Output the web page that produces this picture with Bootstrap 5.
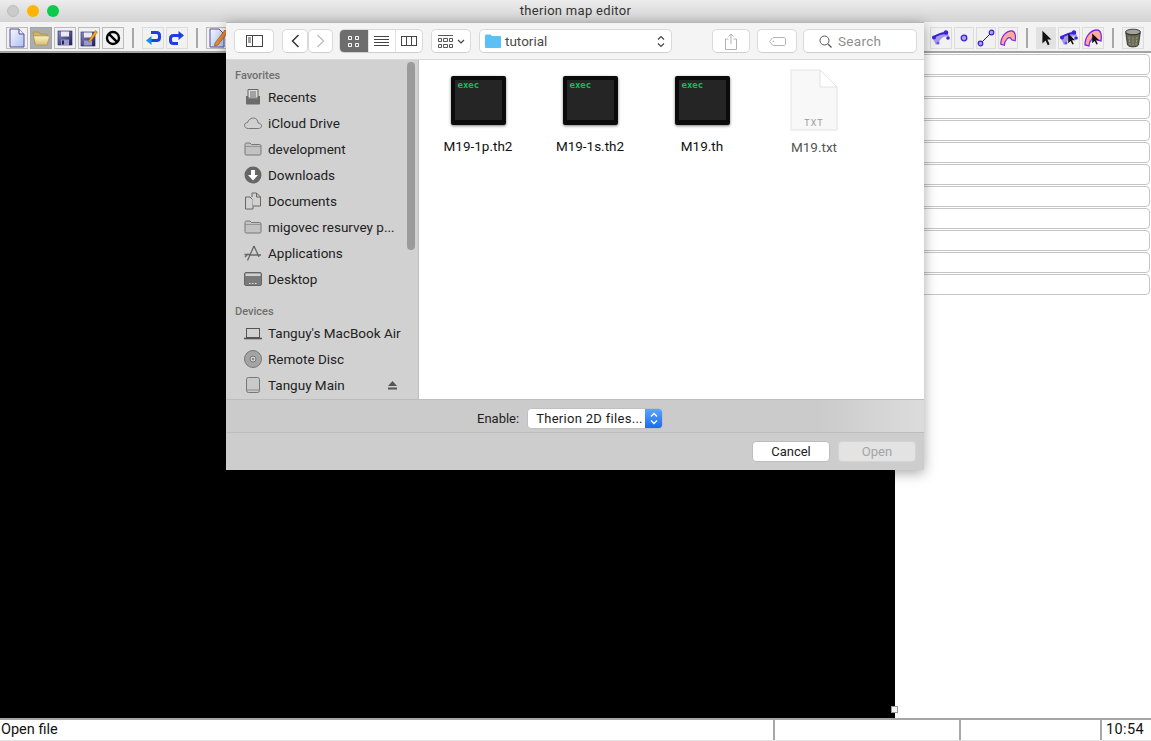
<!DOCTYPE html>
<html lang="en">
<head>
<meta charset="UTF-8">
<title>therion map editor</title>
<link href="https://cdn.jsdelivr.net/npm/bootstrap@5.3.0/dist/css/bootstrap.min.css" rel="stylesheet">
<style>
body { font-family: Roboto, "Liberation Sans", sans-serif; font-size: 13px; color: #1c1c1c; background: #fff; overflow: hidden; }
svg { display: block; }
.app-shell { height: 741px; }
.win-title { height: 22px; background: linear-gradient(#ececec, #d3d3d3); font-size: 13px; color: #333; letter-spacing: .3px; }
.lights { left: 7px; top: 5px; gap: 8px; }
.light { width: 12px; height: 12px; border-radius: 50%; }
.light-off { background: #cbcbcb; border: 1px solid #bcbcbc; }
.light-min { background: #ffb400; }
.light-max { background: #0ccb4b; }
.tool-strip { height: 31px; background: #f3f3f3; border-bottom: 2px solid #a4a4a4; padding: 5px 7px 0 6px; }
.tool-btn { width: 22px; height: 22px; background: #f1f1f1; border: 1px solid #bbb; }
.tool-btn.sm { width: 20px; }
.tool-btn.soft { border-color: #dcdcdc; }
.tool-btn.down { background: #adadad; border-color: #a5a5a5; }
.tool-btn.pressed { background: #e2e2e2; border-color: #e2e2e2; }
.tool-sep { width: 2px; height: 20px; background: #a8a8a8; margin: 1px 8px 0 8px; }
.canvas-area { width: 895px; background: #000; }
.grip { right: -3px; bottom: 5px; width: 7px; height: 7px; background: #f4f4f4; border: 1px solid #999; }
.side-panel { padding: 1px 1px 0 0; gap: 1px; }
.panel-row { height: 21px; background: #fff; border: 1px solid #c6c6c6; border-radius: 4px; }
.status-strip { height: 23px; border-top: 2px solid #a4a4a4; border-bottom: 1px solid #e4e4e4; font-size: 14.5px; line-height: 19px; color: #111; }
.stat-a { width: 773px; padding-left: 1px; }
.stat-b { width: 186px; border-left: 2px solid #a8a8a8; }
.stat-c { width: 141px; border-left: 2px solid #a8a8a8; }
.stat-d { flex: 1; border-left: 2px solid #a8a8a8; padding-left: 4px; letter-spacing: .4px; }
/* open dialog */
.open-sheet { left: 226px; top: 22px; width: 698px; height: 448px; background: #cdcdcd; box-shadow: 0 3px 12px rgba(0,0,0,.35); font-size: 13.5px; }
.sheet-bar { height: 38px; background: #f4f4f4; border-top: 1px solid #b5b5b5; border-bottom: 1px solid #d8d8d8; padding: 6px 0 0 8px; }
.mac-btn { height: 24px; background: #fff; border: 1px solid #d9d9d9; border-bottom-color: #cfcfcf; border-radius: 5px; }
.w-side { width: 40px; margin-right: 8px; }
.w-nav { width: 26px; }
.w-fwd { width: 25px; margin-right: 6px; }
.seg-view { width: 84px; margin-right: 8px; overflow: hidden; }
.seg-item { width: 28px; height: 100%; border-left: 1px solid #e2e2e2; }
.seg-item.on { width: 29px; background: #6d6d6d; border: 0; }
.w-arr { width: 40px; margin-right: 8px; }
.w-path { width: 193px; padding: 0 6px 0 5px; margin-right: 40px; color: #4a4a4a; gap: 4px; }
.w-act { width: 38px; margin-right: 7px; }
.w-tag { width: 40px; margin-right: 6px; }
.w-find { width: 114px; color: #8f8f8f; padding-left: 15px; gap: 6px; letter-spacing: .3px; }
.sheet-body { height: 339px; }
.places { width: 193px; background: #d1d1d1; border-right: 1px solid #bdbdbd; padding-top: 9px; overflow: hidden; }
.place-head { font-size: 11px; font-weight: 500; color: #6f6f6f; padding-left: 9px; height: 14px; line-height: 14px; margin-bottom: 1px; }
.place-head.second { margin-top: 13px; }
.place-row { height: 26px; padding-left: 18px; gap: 6px; color: #222; }
.place-ico { width: 18px; flex: none; }
.eject { margin-left: auto; margin-right: 21px; }
.scroll-thumb { left: 181px; top: 2px; width: 8px; height: 188px; background: #9b9b9b; border-radius: 4px; }
.file-grid { padding: 15px 0 0 3px; }
.file-cell { width: 112px; }
.exec-ico { width: 55px; height: 49px; background: #252525; border: 4px solid #0b0b0b; border-bottom-width: 5px; border-radius: 2px; box-shadow: 0 1px 3px rgba(0,0,0,.5); color: #10c060; font: bold 9px/10px "DejaVu Sans Mono", monospace; padding: 0 0 0 3px; margin-top: 1px; }
.file-name { margin-top: 13px; line-height: 16px; color: #111; }
.file-name.dim { color: #555; }
.txt-ico { margin-top: -6px; margin-bottom: -5px; }
.enable-bar { height: 34px; border-top: 1px solid #bdbdbd; border-bottom: 1px solid #bdbdbd; background: linear-gradient(90deg, #cbcbcb 0, #cbcbcb 85%, #dcdcdc 100%); padding-top: 5px; font-size: 13px; }
.enable-lbl { margin-left: 251px; margin-right: 8px; color: #222; }
.popup { width: 136px; height: 21px; background: #fff; border: 1px solid #c0c0c0; border-radius: 4px; overflow: hidden; padding-left: 8px; letter-spacing: .3px; }
.popup-arrows { width: 17px; height: 21px; background: linear-gradient(#5fa8fb, #1668ef); }
.foot-bar { height: 37px; padding: 0 8px 0 0; gap: 8px; font-size: 13px; }
.foot-btn { width: 78px; height: 21px; background: #fff; border: 1px solid #bcbcbc; border-radius: 4px; color: #222; }
.foot-btn.off { background: #e3e3e3; border-color: #d4d4d4; color: #a4a4a4; }
</style>
</head>
<body>
<svg width="0" height="0" class="position-absolute">
  <defs>
    <linearGradient id="pg" x1="0" y1="0" x2="1" y2="1"><stop offset="0" stop-color="#f6f8ff"/><stop offset="1" stop-color="#a9c0f2"/></linearGradient>
    <linearGradient id="fg" x1="0" y1="0" x2="0" y2="1"><stop offset="0" stop-color="#fbf2c0"/><stop offset="1" stop-color="#d8bf70"/></linearGradient>
    <linearGradient id="dk" x1="0" y1="0" x2="1" y2="1"><stop offset="0" stop-color="#8f8fc8"/><stop offset="1" stop-color="#1d1d56"/></linearGradient>
    <symbol id="i-folder" viewBox="0 0 18 18"><path d="M1 4.500C1 3.700 1.500 3 2.300 3H6l1.500 1.500h8.200c.8 0 1.300.6 1.300 1.300v8c0 .8-.5 1.200-1.300 1.200H2.300C1.500 15 1 14.600 1 13.800Z" fill="#c2c2c2" stroke="#777"/><path d="M1 6.500H17" stroke="#8a8a8a" stroke-width=".8"/></symbol>
    <symbol id="i-line" viewBox="0 0 20 20"><path d="M2 11C3 7 9 4 16 3L18 8C13 8 10 10 8 14L5 17C4 15 3 13 2 11Z" fill="#a59bee"/><path d="M2 9.500C7 6 12 5 17 5" stroke="#3c22d8" stroke-width="2" fill="none"/><circle cx="3" cy="9.500" r="2" fill="#3c22d8"/><circle cx="15" cy="4.500" r="2.200" fill="#3c22d8"/><circle cx="17" cy="10" r="1.800" fill="#3c22d8"/><circle cx="7" cy="15" r="1.500" fill="#6a52e0"/></symbol>
    <symbol id="i-area" viewBox="0 0 20 20"><path d="M2 17C2 8 8 2 14 2C18 2 19 8 18 13L14 12C13 9 11 9 9 11C7 13 6 15 6 18Z" fill="#fcaa9c" stroke="#7c28e4" stroke-width="1.300"/></symbol>
    <symbol id="i-cursor" viewBox="0 0 20 20"><path d="M6 2V16L9.500 12.800L12 18L14 17L11.500 11.800H16Z" fill="#111"/></symbol>
  </defs>
</svg>

<div class="app-shell d-flex flex-column position-relative">
  <div class="win-title d-flex align-items-center justify-content-center position-relative">
    <div class="lights d-flex position-absolute">
      <span class="light light-off"></span><span class="light light-min"></span><span class="light light-max"></span>
    </div>
    <span>therion map editor</span>
  </div>

  <div class="tool-strip d-flex justify-content-between">
    <div class="d-flex gap-0">
      <div class="d-flex" style="gap:2px">
        <div class="tool-btn d-flex align-items-center justify-content-center"><svg width="18" height="20" viewBox="0 0 18 20"><path d="M2 1H11L16 6V19H2Z" fill="url(#pg)" stroke="#5b4a96"/><path d="M11 1V6H16" fill="#e8ecfb" stroke="#5b4a96"/></svg></div>
        <div class="tool-btn down d-flex align-items-center justify-content-center"><svg width="20" height="18" viewBox="0 0 20 18"><path d="M2 3H8L9.500 5H16V15H4Z" fill="#c9b26a" stroke="#9c8848" stroke-width=".6"/><path d="M4.500 16L2.500 7H16.500L18.500 7.500L16 16Z" fill="url(#fg)" stroke="#a48f4b" stroke-width=".6"/></svg></div>
        <div class="tool-btn d-flex align-items-center justify-content-center"><svg width="18" height="18" viewBox="0 0 18 18"><rect x="2" y="2" width="14" height="14" fill="url(#dk)" stroke="#24245c" stroke-width=".6"/><rect x="5" y="2.500" width="8" height="5" fill="#e9e9f5"/><rect x="5" y="10.500" width="8" height="5.500" fill="#9a9acb"/><rect x="6" y="11.500" width="2" height="4" fill="#24245c"/></svg></div>
        <div class="tool-btn d-flex align-items-center justify-content-center"><svg width="18" height="18" viewBox="0 0 18 18"><rect x="1" y="3" width="14" height="14" fill="url(#dk)" stroke="#24245c" stroke-width=".6"/><rect x="4" y="3.500" width="8" height="5" fill="#e9e9f5"/><rect x="4" y="11.500" width="8" height="5" fill="#9a9acb"/><path d="M9 11L15.500 1.500L17.500 3L11 12L8.500 13Z" fill="#f4a81d" stroke="#a8650c" stroke-width=".5"/></svg></div>
        <div class="tool-btn d-flex align-items-center justify-content-center"><svg width="16" height="16" viewBox="0 0 16 16"><circle cx="8" cy="8" r="6" fill="none" stroke="#000" stroke-width="2.400"/><path d="M3.800 3.800L12.200 12.200" stroke="#000" stroke-width="2.400"/></svg></div>
      </div>
      <div class="tool-sep"></div>
      <div class="d-flex" style="gap:2px">
        <div class="tool-btn soft d-flex align-items-center justify-content-center"><svg width="16" height="16" viewBox="0 0 16 16"><path d="M6 2.500H11.500C13.500 2.500 14.500 3.500 14.500 5.500V7.500C14.500 9.500 13.500 10.500 11.500 10.500H5" fill="none" stroke="#1b3fe0" stroke-width="3"/><path d="M6.500 6L1 10.500L6.500 15Z" fill="#1b8ce8"/></svg></div>
        <div class="tool-btn soft d-flex align-items-center justify-content-center"><svg width="16" height="16" viewBox="0 0 16 16"><path d="M10 5.500H4.500C2.500 5.500 1.500 6.500 1.500 8.500V10.500C1.500 12.500 2.500 13.500 4.500 13.500H9" fill="none" stroke="#1b3fe0" stroke-width="3"/><path d="M9.500 1L15 5.500L9.500 10Z" fill="#1b3fe0"/></svg></div>
      </div>
      <div class="tool-sep"></div>
      <div class="tool-btn d-flex align-items-center justify-content-center position-relative"><svg width="18" height="20" viewBox="0 0 18 20"><path d="M2 1H11L16 6V19H2Z" fill="url(#pg)" stroke="#5b4a96"/><path d="M7 15L17 2L20 4L10 17L6.500 18Z" fill="#ee8a2c" stroke="#8a4a10" stroke-width=".6"/></svg></div>
    </div>
    <div class="d-flex">
      <div class="d-flex" style="gap:2px">
        <div class="tool-btn soft d-flex align-items-center justify-content-center"><svg width="20" height="20"><use href="#i-line"/></svg></div>
        <div class="tool-btn soft sm d-flex align-items-center justify-content-center"><svg width="8" height="8" viewBox="0 0 8 8"><circle cx="4" cy="4" r="2.800" fill="#a9a0ee" stroke="#3c22d8" stroke-width="1.300"/></svg></div>
        <div class="tool-btn soft sm d-flex align-items-center justify-content-center"><svg width="18" height="18" viewBox="0 0 18 18"><path d="M3 15L15 3" stroke="#222" stroke-width="1"/><circle cx="3.500" cy="14.500" r="2.300" fill="#a9a0ee" stroke="#3c22d8" stroke-width="1.200"/><circle cx="14.500" cy="3.500" r="2.300" fill="#a9a0ee" stroke="#3c22d8" stroke-width="1.200"/></svg></div>
        <div class="tool-btn soft sm d-flex align-items-center justify-content-center"><svg width="20" height="20"><use href="#i-area"/></svg></div>
      </div>
      <div class="tool-sep"></div>
      <div class="d-flex" style="gap:2px">
        <div class="tool-btn sm pressed d-flex align-items-center justify-content-center"><svg width="20" height="20"><use href="#i-cursor"/></svg></div>
        <div class="tool-btn soft position-relative"><svg width="20" height="20"><use href="#i-line"/></svg><svg class="position-absolute top-0 start-0" width="20" height="20" viewBox="-5 -4 20 20"><use href="#i-cursor" width="14" height="14"/></svg></div>
        <div class="tool-btn soft position-relative"><svg width="20" height="20"><use href="#i-area"/></svg><svg class="position-absolute top-0 start-0" width="20" height="20" viewBox="-5 -4 20 20"><use href="#i-cursor" width="14" height="14"/></svg></div>
      </div>
      <div class="tool-sep"></div>
      <div class="tool-btn soft d-flex align-items-center justify-content-center"><svg width="20" height="20" viewBox="0 0 18 20"><ellipse cx="9" cy="4" rx="7.500" ry="2.800" fill="#a3a398" stroke="#222" stroke-width=".8"/><path d="M1.800 5L3.500 17C5 19.500 13 19.500 14.500 17L16.200 5C13 7.500 5 7.500 1.800 5Z" fill="#6b6b55" stroke="#222" stroke-width=".8"/><path d="M5 9L6 17M9 9.500V18M13 9L12 17" stroke="#9c9c84" stroke-width="1" stroke-dasharray="2 1"/></svg></div>
    </div>
  </div>

  <div class="d-flex flex-grow-1">
    <div class="canvas-area position-relative"><span class="grip position-absolute"></span></div>
    <div class="side-panel flex-grow-1 d-flex flex-column">
      <div class="panel-row"></div><div class="panel-row"></div><div class="panel-row"></div><div class="panel-row"></div>
      <div class="panel-row"></div><div class="panel-row"></div><div class="panel-row"></div><div class="panel-row"></div>
      <div class="panel-row"></div><div class="panel-row"></div><div class="panel-row"></div>
    </div>
  </div>

  <div class="status-strip d-flex">
    <div class="stat-a">Open file</div>
    <div class="stat-b"></div>
    <div class="stat-c"></div>
    <div class="stat-d">10:54</div>
  </div>

  <!-- file dialog lies over the main window -->
  <div class="open-sheet position-absolute d-flex flex-column">
    <div class="sheet-bar d-flex">
      <div class="mac-btn w-side d-flex align-items-center justify-content-center"><svg width="17" height="12" viewBox="0 0 17 12"><rect x=".5" y=".5" width="16" height="11" fill="none" stroke="#444"/><path d="M6.500 .5V11.500M2 3H5M2 5H5M2 7H5" stroke="#444" fill="none"/></svg></div>
      <div class="mac-btn w-nav d-flex align-items-center justify-content-center"><svg width="9" height="14" viewBox="0 0 9 14"><path d="M7.500 1L1.500 7L7.500 13" fill="none" stroke="#333" stroke-width="1.500"/></svg></div>
      <div class="mac-btn w-fwd d-flex align-items-center justify-content-center"><svg width="9" height="14" viewBox="0 0 9 14"><path d="M1.500 1L7.500 7L1.500 13" fill="none" stroke="#c2c2c2" stroke-width="1.500"/></svg></div>
      <div class="mac-btn seg-view d-flex align-items-center">
        <div class="seg-item on d-flex align-items-center justify-content-center"><svg width="11" height="11" viewBox="0 0 11 11"><path d="M.5 .5H3.500V3.500H.5ZM7.500 .5H10.500V3.500H7.500ZM.5 7.500H3.500V10.500H.5ZM7.500 7.500H10.500V10.500H7.500Z" fill="none" stroke="#fff"/></svg></div>
        <div class="seg-item d-flex align-items-center justify-content-center"><svg width="15" height="10" viewBox="0 0 15 10"><path d="M0 .5H15M0 3.500H15M0 6.500H15M0 9.500H15" stroke="#444"/></svg></div>
        <div class="seg-item d-flex align-items-center justify-content-center"><svg width="16" height="10" viewBox="0 0 16 10"><rect x=".5" y=".5" width="15" height="9" fill="none" stroke="#444"/><path d="M5.500 .5V9.500M10.500 .5V9.500" stroke="#444"/></svg></div>
      </div>
      <div class="mac-btn w-arr d-flex align-items-center justify-content-center gap-1"><svg width="15" height="13" viewBox="0 0 15 13"><path d="M0 .5H15M.5 3.500H3.500V6.500H.5ZM5.500 3.500H9.500V6.500H5.500ZM11.500 3.500H14.500V6.500H11.500ZM.5 9.500H3.500V12.500H.5ZM5.500 9.500H9.500V12.500H5.500ZM11.500 9.500H14.500V12.500H11.500Z" fill="none" stroke="#444" stroke-width=".9"/></svg><svg width="8" height="5" viewBox="0 0 8 5"><path d="M1 1L4 4L7 1" fill="none" stroke="#444" stroke-width="1.200"/></svg></div>
      <div class="mac-btn w-path d-flex align-items-center">
        <svg width="16" height="14" viewBox="0 0 16 14"><path d="M0 2C0 1 .5 .5 1.500 .5H5.500L7 2H15C15.500 2 16 2.500 16 3V13C16 13.500 15.500 14 15 14H1C.5 14 0 13.500 0 13Z" fill="#5ac0f5"/></svg>
        <span>tutorial</span>
        <svg class="ms-auto" width="8" height="13" viewBox="0 0 8 13"><path d="M1 4.500L4 1.500L7 4.500M1 8.500L4 11.500L7 8.500" fill="none" stroke="#444" stroke-width="1.200"/></svg>
      </div>
      <div class="mac-btn w-act d-flex align-items-center justify-content-center"><svg width="12" height="17" viewBox="0 0 12 17"><path d="M3.500 6H.5V16.500H11.500V6H8.500M6 11V1M3.500 3.500L6 1L8.500 3.500" fill="none" stroke="#b0b0b0"/></svg></div>
      <div class="mac-btn w-tag d-flex align-items-center justify-content-center"><svg width="17" height="9" viewBox="0 0 17 9"><path d="M4 .5H15C16 .5 16.500 1 16.500 2V7C16.500 8 16 8.500 15 8.500H4L.5 4.500Z" fill="none" stroke="#b5b5b5"/><circle cx="4.500" cy="4.500" r=".8" fill="#b5b5b5"/></svg></div>
      <div class="mac-btn w-find d-flex align-items-center"><svg width="13" height="13" viewBox="0 0 13 13"><circle cx="5.500" cy="5.500" r="4.500" fill="none" stroke="#555"/><path d="M9 9L12.500 12.500" stroke="#555" stroke-width="1.200"/></svg><span>Search</span></div>
    </div>

    <div class="sheet-body d-flex bg-white">
      <div class="places position-relative">
        <div class="place-head">Favorites</div>
        <div class="place-row d-flex align-items-center"><svg class="place-ico" width="18" height="18" viewBox="0 0 18 18"><path d="M4 1.500H14V10H4Z" fill="#ddd" stroke="#666"/><path d="M6 4H12M6 6H12M6 8H12" stroke="#666"/><path d="M2 8L4 8V10.500H14V8H16V15.500C16 16 15.500 16.500 15 16.500H3C2.500 16.500 2 16 2 15.500Z" fill="#6b6b6b"/></svg><span>Recents</span></div>
        <div class="place-row d-flex align-items-center"><svg class="place-ico" width="18" height="18" viewBox="0 0 18 18"><path d="M4.500 14.500C2 14.500 .5 13 .5 11.300C.5 9.600 2 8.300 3.600 8.600C4 6.600 6 4 9.500 4C12.500 4 14 6.500 14 9C16 9 17.500 10.300 17.500 11.800C17.500 13.300 16.300 14.500 14.500 14.500Z" fill="none" stroke="#777"/></svg><span>iCloud Drive</span></div>
        <div class="place-row d-flex align-items-center"><svg class="place-ico" width="18" height="18"><use href="#i-folder"/></svg><span>development</span></div>
        <div class="place-row d-flex align-items-center"><svg class="place-ico" width="18" height="18" viewBox="0 0 18 18"><circle cx="9" cy="9" r="8.500" fill="#666"/><path d="M7 4H11V9H14L9 14.500L4 9H7Z" fill="#fff"/></svg><span>Downloads</span></div>
        <div class="place-row d-flex align-items-center"><svg class="place-ico" width="18" height="18" viewBox="0 0 18 18"><path d="M1.500 5H6L9 8V17H1.500Z" fill="#d1d1d1" stroke="#666"/><path d="M8 1H12.500L16.500 5V14H9M8 1V5" fill="#d1d1d1" stroke="#666"/><path d="M12.500 1V5H16.500" fill="none" stroke="#666"/></svg><span>Documents</span></div>
        <div class="place-row d-flex align-items-center"><svg class="place-ico" width="18" height="18"><use href="#i-folder"/></svg><span>migovec resurvey p...</span></div>
        <div class="place-row d-flex align-items-center"><svg class="place-ico" width="18" height="18" viewBox="0 0 18 18"><path d="M3.500 16.500L10 2M10 2L15 13M5 11H17M.5 10.500H7M1 13L3 11" fill="none" stroke="#666" stroke-width="1.300"/></svg><span>Applications</span></div>
        <div class="place-row d-flex align-items-center"><svg class="place-ico" width="18" height="18" viewBox="0 0 18 18"><rect x=".5" y="2.500" width="17" height="13" rx="1.500" fill="#7a7a7a" stroke="#666"/><rect x="1.500" y="3.500" width="15" height="2.500" fill="#d1d1d1"/><path d="M5 13.500H6.500M8 13.500H9.500M11 13.500H12.500" stroke="#e4e4e4" stroke-width="1.200"/></svg><span>Desktop</span></div>
        <div class="place-head second">Devices</div>
        <div class="place-row d-flex align-items-center"><svg class="place-ico" width="18" height="18" viewBox="0 0 18 18"><rect x="2.500" y="4.500" width="13" height="9" fill="#d1d1d1" stroke="#555"/><path d="M0 14.500H18" stroke="#555" stroke-width="1.600"/></svg><span>Tanguy's MacBook Air</span></div>
        <div class="place-row d-flex align-items-center"><svg class="place-ico" width="18" height="18" viewBox="0 0 18 18"><circle cx="9" cy="9" r="8.500" fill="#a4a4a4" stroke="#777"/><circle cx="9" cy="9" r="3" fill="#d1d1d1" stroke="#777"/><circle cx="9" cy="9" r="1.200" fill="#888"/></svg><span>Remote Disc</span></div>
        <div class="place-row d-flex align-items-center"><svg class="place-ico" width="18" height="18" viewBox="0 0 18 18"><rect x="2.500" y="1.500" width="13" height="15" rx="2" fill="#c9c9c9" stroke="#777"/><path d="M3 14H15" stroke="#888"/></svg><span>Tanguy Main</span><svg class="eject" width="9" height="9" viewBox="0 0 9 9"><path d="M4.500 0L9 5H0ZM0 6.500H9V8.500H0Z" fill="#555"/></svg></div>
        <div class="scroll-thumb position-absolute"></div>
      </div>
      <div class="file-grid d-flex align-items-start flex-grow-1">
        <div class="file-cell d-flex flex-column align-items-center"><div class="exec-ico">exec</div><div class="file-name">M19-1p.th2</div></div>
        <div class="file-cell d-flex flex-column align-items-center"><div class="exec-ico">exec</div><div class="file-name">M19-1s.th2</div></div>
        <div class="file-cell d-flex flex-column align-items-center"><div class="exec-ico">exec</div><div class="file-name">M19.th</div></div>
        <div class="file-cell d-flex flex-column align-items-center"><svg class="txt-ico" width="48" height="62" viewBox="0 0 48 62"><path d="M1 1H30L47 18V61H1Z" fill="#f8f8f8" stroke="#e2e2e2"/><path d="M30 1V18H47Z" fill="#fff" stroke="#e2e2e2"/><text x="24" y="57" text-anchor="middle" font-size="9" letter-spacing="1" fill="#9a9a9a" font-family="Roboto, sans-serif">TXT</text></svg><div class="file-name dim">M19.txt</div></div>
      </div>
    </div>

    <div class="enable-bar d-flex align-items-center">
      <span class="enable-lbl">Enable:</span>
      <div class="popup d-flex align-items-center justify-content-between"><span>Therion 2D files...</span><span class="popup-arrows d-flex align-items-center justify-content-center"><svg width="8" height="13" viewBox="0 0 8 13"><path d="M1 4.500L4 1.500L7 4.500M1 8.500L4 11.500L7 8.500" fill="none" stroke="#fff" stroke-width="1.300"/></svg></span></div>
    </div>

    <div class="foot-bar d-flex align-items-center justify-content-end">
      <div class="foot-btn d-flex align-items-center justify-content-center">Cancel</div>
      <div class="foot-btn off d-flex align-items-center justify-content-center">Open</div>
    </div>
  </div>
</div>
<script src="https://cdn.jsdelivr.net/npm/bootstrap@5.3.0/dist/js/bootstrap.bundle.min.js"></script>
</body>
</html>
